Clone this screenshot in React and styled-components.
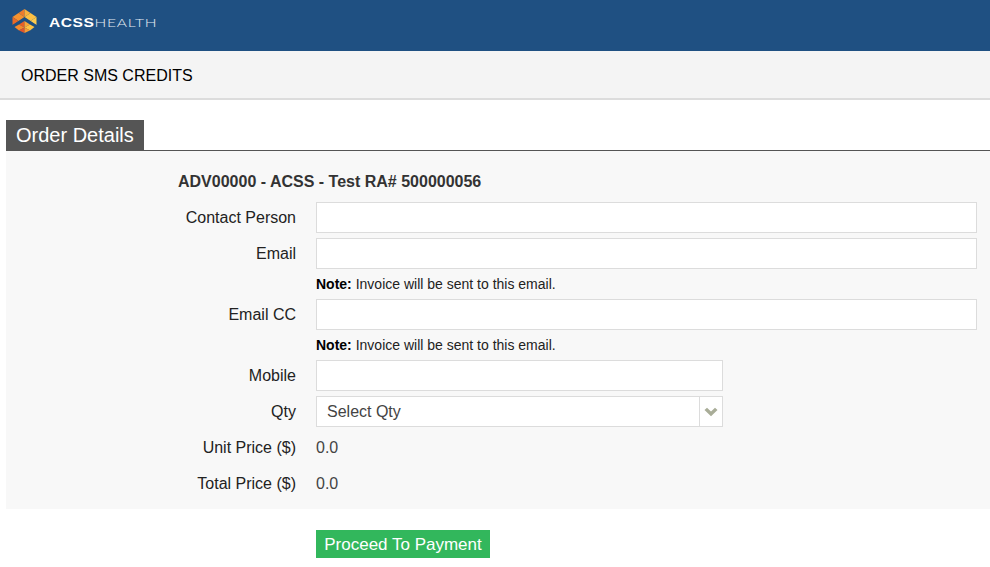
import React from "react";
import styled, { createGlobalStyle } from "styled-components";

const Global = createGlobalStyle`
  html, body { margin: 0; padding: 0; background: #fff; }
  body { font-family: "Liberation Sans", Arial, sans-serif; font-size: 16px; color: #000; }
`;
const Page = styled.div`width: 990px; height: 567px; overflow: hidden; background: #fff;`;
const Header = styled.header`
  height: 51px; background: #1f5082; display: flex; align-items: center; padding: 0 0 9px 12px; box-sizing: border-box; gap: 12px;
`;
const LogoText = styled.div`
  color: #fff; font-size: 12px; line-height: 14px; white-space: nowrap; letter-spacing: 0.4px; margin-top: 3px;
  transform: scaleX(1.3); transform-origin: left center;
  b { font-family: "Liberation Sans", sans-serif; font-weight: 700; }
  span { font-family: "Lato", sans-serif; font-weight: 300; color: #e4eaf1; letter-spacing: 0.6px; }
`;
const SubHeader = styled.div`
  height: 49px; background: #f4f4f4; border-bottom: 2px solid #dcdcdc; display: flex; align-items: center; padding: 2px 0 0 21px; box-sizing: border-box;
`;
const SubTitle = styled.h1`margin: 0; font-size: 16px; font-weight: 400; color: #000;`;
const Section = styled.section`margin: 20px 0 0 6px;`;
const TabBar = styled.div`border-bottom: 1px solid #555; height: 30px; display: flex;`;
const Tab = styled.h2`
  margin: 0; height: 30px; background: #555; color: #fff; font-size: 20px; font-weight: 400; line-height: 30px; padding: 0 10px; box-sizing: border-box; width: 138px;
`;
const Panel = styled.div`
  background: #f8f8f8; height: 358px; box-sizing: border-box; padding: 21px 13px 0 0; display: flex; flex-direction: column;
`;
const Account = styled.div`
  margin-left: 172px; font-weight: 700; font-size: 16px; line-height: 20px; color: #333; margin-bottom: 10px;
`;
const Row = styled.div`
  display: grid; grid-template-columns: 290px 1fr; column-gap: 20px; align-items: center; min-height: 31px; margin-bottom: 5px;
`;
const Label = styled.label`text-align: right; font-size: 16px; color: #222;`;
const Input = styled.input`
  display: block; box-sizing: border-box; height: 31px; width: ${p => p.$short ? "407px" : "661px"};
  border: 1px solid #dcdcdc; border-radius: 0; background: #fff; outline: none; padding: 0 10px; font: inherit;
`;
const Note = styled.div`
  height: 20px; margin: 0 0 5px 310px; font-size: 14px; line-height: 20px; color: #222;
  b { font-weight: 700; color: #000; }
`;
const Select = styled.div`
  box-sizing: border-box; height: 31px; width: 407px; border: 1px solid #dcdcdc; background: #fff; display: flex; align-items: center;
`;
const SelectText = styled.span`flex: 1; padding-left: 10px; font-size: 16px; color: #444;`;
const Arrow = styled.span`
  width: 22px; height: 100%; border-left: 1px solid #dcdcdc; display: flex; align-items: center; justify-content: center;
`;
const Value = styled.span`font-size: 16px; color: #444;`;
const Actions = styled.div`padding: 21px 0 0 316px;`;
const Button = styled.button`
  height: 28px; width: 174px; padding: 1px 0 0; border: 0; background: #32b75c; color: #fff; font: inherit; font-size: 17px; line-height: 27px; cursor: pointer;
`;

const Logo = () => (
  <svg width="25" height="24" viewBox="0 0 25 24" aria-hidden="true">
    <path d="M12.5 0 L6.5 4 L12.5 8 Z" fill="#ee7c2b" />
    <path d="M12.5 0 L18.5 4 L12.5 8 Z" fill="#fbb03b" />
    <path d="M6.5 4 L0.5 8 L6.5 12 L12.5 8 Z" fill="#f5922f" />
    <path d="M18.5 4 L24.5 8 L18.5 12 L12.5 8 Z" fill="#fcc044" />
    <path d="M0.5 8 V16 L6.5 12 Z" fill="#ea6a26" />
    <path d="M24.5 8 V16 L18.5 12 Z" fill="#fdcb4e" />
    <path d="M12.5 12 L7 15.5 L12.5 18.5 Z" fill="#e85f26" />
    <path d="M12.5 12 L18 15.5 L12.5 18.5 Z" fill="#fba536" />
    <path d="M7 15.5 L2.5 18 L7 21.5 L12.5 18.5 Z" fill="#f58a2c" />
    <path d="M18 15.5 L22.5 18 L18 21.5 L12.5 18.5 Z" fill="#fdc244" />
    <path d="M7 21.5 L12.5 24 V18.5 Z" fill="#e2552a" />
    <path d="M18 21.5 L12.5 24 V18.5 Z" fill="#f99b32" />
    <path d="M0 17.5 L12.5 9.5 L25 17.5" fill="none" stroke="#1f5082" strokeWidth="1.6" />
  </svg>
);

const Chevron = () => (
  <svg width="14" height="10" viewBox="0 0 14 10" aria-hidden="true">
    <path d="M0.5 3 L3 0.8 L7 4.5 L11 0.8 L13.5 3 L7 9.2 Z" fill="#a9ad98" />
  </svg>
);

export default function App() {
  return (
    <Page>
      <Global />
      <Header>
        <Logo />
        <LogoText><b>ACSS</b><span>HEALTH</span></LogoText>
      </Header>
      <SubHeader><SubTitle>ORDER SMS CREDITS</SubTitle></SubHeader>
      <Section>
        <TabBar><Tab>Order Details</Tab></TabBar>
        <Panel>
          <Account>ADV00000 - ACSS - Test RA# 500000056</Account>
          <Row><Label>Contact Person</Label><Input /></Row>
          <Row><Label>Email</Label><Input /></Row>
          <Note><b>Note:</b> Invoice will be sent to this email.</Note>
          <Row><Label>Email CC</Label><Input /></Row>
          <Note><b>Note:</b> Invoice will be sent to this email.</Note>
          <Row><Label>Mobile</Label><Input $short /></Row>
          <Row>
            <Label>Qty</Label>
            <Select><SelectText>Select Qty</SelectText><Arrow><Chevron /></Arrow></Select>
          </Row>
          <Row><Label>Unit Price ($)</Label><Value>0.0</Value></Row>
          <Row><Label>Total Price ($)</Label><Value>0.0</Value></Row>
        </Panel>
      </Section>
      <Actions><Button>Proceed To Payment</Button></Actions>
    </Page>
  );
}
